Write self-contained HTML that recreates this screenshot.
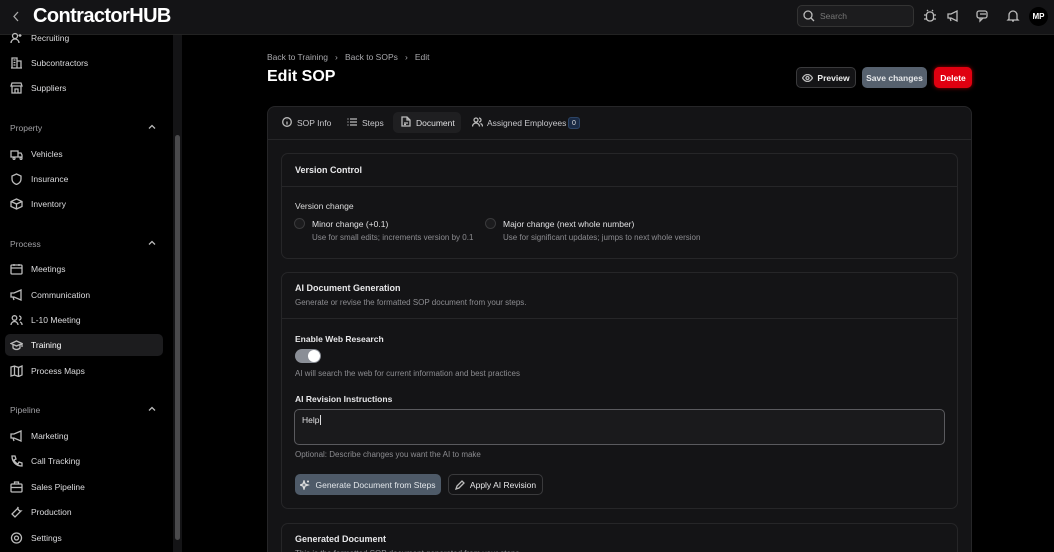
<!DOCTYPE html>
<html style="width:1054px;height:552px;overflow:hidden"><head><meta charset="utf-8"><style>
*{box-sizing:border-box;margin:0;padding:0}
body{width:1054px;height:552px;overflow:hidden;background:#000;font-family:"Liberation Sans",sans-serif;color:#e8e8ea;position:relative;font-size:12px}
.a{position:absolute}
.top{left:0;top:0;width:1054px;height:35px;background:#141416;border-bottom:1px solid #222}
.side{left:0;top:35px;width:172px;height:517px;background:#000}
.si{position:absolute;left:31px;font-size:8.5px;color:#dcdcde;line-height:12px}
.ic{position:absolute;left:10px;width:13px;height:12px}
.sh{position:absolute;left:10px;font-size:8.5px;color:#a0a0a4}
.chev{position:absolute;left:148px;width:8px;height:8px}
.card{background:#141416;border:1px solid #262628;border-radius:8px}
.lbl{font-size:8.5px;font-weight:bold;color:#e8e8ea}
.mut{font-size:8px;color:#8c8c90}
.btn{position:absolute;border-radius:5px;font-size:8.5px;display:flex;align-items:center;justify-content:center;font-weight:bold}
svg{stroke:#bbb;fill:none;stroke-width:1.3}
</style></head><body>
<div class="a top"></div>
<svg class="a" style="left:11px;top:10px" width="10" height="13" viewBox="0 0 10 13"><path d="M7 2L3 6.5L7 11" stroke="#aaa"/></svg>
<div class="a" style="left:33px;top:5px;font-size:20px;font-weight:bold;color:#fff;letter-spacing:-0.6px">ContractorHUB</div>
<div class="a" style="left:797px;top:5px;width:117px;height:22px;border:1px solid #333;border-radius:5px;background:#1c1c1e"></div>
<svg class="a" style="left:803px;top:10px" width="12" height="12" viewBox="0 0 12 12"><circle cx="5" cy="5" r="4"/><path d="M8 8l3 3"/></svg>
<div class="a" style="left:820px;top:11px;font-size:8.5px;color:#777">Search</div>
<svg class="a" style="left:923px;top:9px" width="14" height="14" viewBox="0 0 14 14"><rect x="3.5" y="3" width="7" height="9" rx="3"/><path d="M1 6h2.5M10.5 6h2.5M1 10h2.5M10.5 10h2.5M5 2l-1-1M9 2l1-1"/></svg>
<svg class="a" style="left:946px;top:9px" width="14" height="14" viewBox="0 0 14 14"><path d="M2 5h3l6-3v10l-6-3H2z M4 9l1 3"/></svg>
<svg class="a" style="left:976px;top:9px" width="14" height="14" viewBox="0 0 14 14"><rect x="1" y="2" width="10" height="7" rx="2"/><path d="M4 9v3l3-3M4 5h6"/></svg>
<svg class="a" style="left:1006px;top:9px" width="14" height="14" viewBox="0 0 14 14"><path d="M3 10V6a4 4 0 018 0v4l1 1H2zM6 12h2"/></svg>
<div class="a" style="left:1029px;top:7px;width:19px;height:19px;border-radius:50%;background:#000;color:#fff;font-size:8px;font-weight:bold;display:flex;align-items:center;justify-content:center">MP</div>

<div class="a side"></div>
<div class="a" style="left:173px;top:35px;width:9px;height:517px;background:#141416"></div>
<div class="a" style="left:175px;top:135px;width:5px;height:405px;background:#4a4a4c;border-radius:3px"></div>
<div class="a" style="left:5px;top:334px;width:158px;height:22px;background:#1c1c1e;border-radius:5px"></div>

<svg class="ic" style="top:32px" viewBox="0 0 13 12"><circle cx="5" cy="4" r="2.5"/><path d="M1 11a4 4 0 018 0M10 2v3M8.5 3.5h3"/></svg><div class="si" style="top:32px">Recruiting</div>
<svg class="ic" style="top:57px" viewBox="0 0 13 12"><path d="M1 11h11M2 11V1h5v10M7 4h4v7M3.5 3h2M3.5 5.5h2M3.5 8h2"/></svg><div class="si" style="top:57px">Subcontractors</div>
<svg class="ic" style="top:82px" viewBox="0 0 13 12"><path d="M1 4l1-3h9l1 3zM2 4v7h9V4M5 11V7h3v4"/></svg><div class="si" style="top:82px">Suppliers</div>
<div class="sh" style="top:123px">Property</div><svg class="chev" style="top:123px" viewBox="0 0 8 8"><path d="M1 5.5L4 2.5L7 5.5"/></svg>
<svg class="ic" style="top:148px" viewBox="0 0 13 12"><path d="M1 3h7v6H1zM8 5h3l1 2v2H8M3 10.5a1 1 0 100-.1M10 10.5a1 1 0 100-.1"/></svg><div class="si" style="top:148px">Vehicles</div>
<svg class="ic" style="top:173px" viewBox="0 0 13 12"><path d="M6.5 1L11 3v3c0 3-2 4.5-4.5 5.5C4 10.5 2 9 2 6V3z"/></svg><div class="si" style="top:173px">Insurance</div>
<svg class="ic" style="top:198px" viewBox="0 0 13 12"><path d="M6.5 1L12 3.5v5L6.5 11L1 8.5v-5zM1 3.5L6.5 6L12 3.5M6.5 6v5"/></svg><div class="si" style="top:198px">Inventory</div>
<div class="sh" style="top:239px">Process</div><svg class="chev" style="top:239px" viewBox="0 0 8 8"><path d="M1 5.5L4 2.5L7 5.5"/></svg>
<svg class="ic" style="top:263px" viewBox="0 0 13 12"><rect x="1" y="2" width="11" height="9" rx="1"/><path d="M1 5h11M4 1v2M9 1v2"/></svg><div class="si" style="top:263px">Meetings</div>
<svg class="ic" style="top:289px" viewBox="0 0 13 12"><path d="M1 4h3l7-3v10L4 8H1zM3 8l1 3"/></svg><div class="si" style="top:289px">Communication</div>
<svg class="ic" style="top:314px" viewBox="0 0 13 12"><circle cx="4.5" cy="4" r="2.3"/><path d="M1 11a3.5 3.5 0 017 0M9 2a2 2 0 010 4M10 8a3 3 0 012 3"/></svg><div class="si" style="top:314px">L-10 Meeting</div>
<svg class="ic" style="top:339px" viewBox="0 0 13 12"><path d="M6.5 2L12 4.5L6.5 7L1 4.5zM3 6v3c2 2 5 2 7 0V6M12 4.5V8"/></svg><div class="si" style="top:339px;color:#fff">Training</div>
<svg class="ic" style="top:365px" viewBox="0 0 13 12"><path d="M1 2l3.5-1 4 1.5L12 1v9l-3.5 1.5-4-1.5L1 11zM4.5 1v9M8.5 2.5v9"/></svg><div class="si" style="top:365px">Process Maps</div>
<div class="sh" style="top:405px">Pipeline</div><svg class="chev" style="top:405px" viewBox="0 0 8 8"><path d="M1 5.5L4 2.5L7 5.5"/></svg>
<svg class="ic" style="top:430px" viewBox="0 0 13 12"><path d="M1 4h3l7-3v10L4 8H1zM3 8l1 3"/></svg><div class="si" style="top:430px">Marketing</div>
<svg class="ic" style="top:455px" viewBox="0 0 13 12"><path d="M2 1h3l1 3-2 1a7 7 0 004 4l1-2 3 1v3c-6 0-10-4-10-10z"/></svg><div class="si" style="top:455px">Call Tracking</div>
<svg class="ic" style="top:481px" viewBox="0 0 13 12"><rect x="1" y="3" width="11" height="8" rx="1"/><path d="M4.5 3V1h4v2M1 6.5h11"/></svg><div class="si" style="top:481px">Sales Pipeline</div>
<svg class="ic" style="top:506px" viewBox="0 0 13 12"><path d="M8 1a3 3 0 003 4L5 11 2 8l6-6z"/></svg><div class="si" style="top:506px">Production</div>
<svg class="ic" style="top:532px" viewBox="0 0 13 12"><circle cx="6.5" cy="6" r="2"/><circle cx="6.5" cy="6" r="5"/></svg><div class="si" style="top:532px">Settings</div>

<div class="a" style="left:267px;top:52px;font-size:8.5px;color:#a8a8ac">Back to Training &nbsp;&nbsp;›&nbsp;&nbsp; Back to SOPs &nbsp;&nbsp;›&nbsp;&nbsp; Edit</div>
<div class="a" style="left:267px;top:68px;font-size:16px;font-weight:bold;color:#fff">Edit SOP</div>
<div class="btn" style="left:796px;top:67px;width:60px;height:21px;border:1px solid #3a3a3c;background:#141416;color:#eee"><svg width="11" height="8" viewBox="0 0 11 8" style="margin-right:4px"><path d="M.5 4C2 1.5 4 .5 5.5.5S9 1.5 10.5 4C9 6.5 7 7.5 5.5 7.5S2 6.5.5 4z"/><circle cx="5.5" cy="4" r="1.5"/></svg>Preview</div>
<div class="btn" style="left:862px;top:67px;width:65px;height:21px;background:#56616e;color:#e6e8ea">Save changes</div>
<div class="btn" style="left:934px;top:67px;width:38px;height:21px;background:#e00010;color:#fff;box-shadow:0 0 4px #900">Delete</div>

<div class="a card" style="left:267px;top:106px;width:705px;height:446px;border-bottom:none;border-radius:8px 8px 0 0"></div>
<div class="a" style="left:268px;top:139px;width:703px;height:1px;background:#262628"></div>
<div class="a" style="left:393px;top:112px;width:68px;height:21px;background:#1f1f21;border-radius:5px"></div>
<svg class="a" style="left:282px;top:117px" width="10" height="10" viewBox="0 0 10 10"><circle cx="5" cy="5" r="4.3"/><path d="M5 4.5v3M5 2.7v.3"/></svg>
<div class="a" style="left:297px;top:118px;font-size:8.5px;color:#c8c8cc">SOP Info</div>
<svg class="a" style="left:347px;top:117px" width="10" height="10" viewBox="0 0 10 10"><path d="M3 2h7M3 5h7M3 8h7M.5 2h1M.5 5h1M.5 8h1"/></svg>
<div class="a" style="left:362px;top:118px;font-size:8.5px;color:#c8c8cc">Steps</div>
<svg class="a" style="left:401px;top:116px" width="10" height="11" viewBox="0 0 10 11"><path d="M1 1h5l3 3v6H1zM6 1v3h3M3 7h4M3 8.5h2"/></svg>
<div class="a" style="left:416px;top:118px;font-size:8.5px;color:#e0e0e2">Document</div>
<svg class="a" style="left:472px;top:117px" width="11" height="10" viewBox="0 0 11 10"><circle cx="4" cy="3" r="2"/><path d="M.5 9.5a3.5 3.5 0 017 0M7 1a2 2 0 010 4M8.5 6.5a3 3 0 012 3"/></svg>
<div class="a" style="left:487px;top:118px;font-size:8.5px;color:#c8c8cc">Assigned Employees</div>
<div class="a" style="left:568px;top:117px;width:12px;height:12px;background:#1a2a44;border:1px solid #2c4466;border-radius:3px;font-size:7px;color:#ddd;display:flex;align-items:center;justify-content:center">0</div>

<div class="a card" style="left:281px;top:153px;width:677px;height:106px;border-radius:7px"></div>
<div class="a" style="left:282px;top:186px;width:675px;height:1px;background:#262628"></div>
<div class="a lbl" style="left:295px;top:165px;font-size:9px">Version Control</div>
<div class="a lbl" style="left:295px;top:201px;font-weight:normal;color:#ddd">Version change</div>
<div class="a" style="left:294px;top:218px;width:11px;height:11px;border-radius:50%;border:1px solid #3a3a3c;background:#1c1c1e"></div>
<div class="a lbl" style="left:312px;top:219px;font-weight:normal;color:#e0e0e2">Minor change (+0.1)</div>
<div class="a mut" style="left:312px;top:233px">Use for small edits; increments version by 0.1</div>
<div class="a" style="left:485px;top:218px;width:11px;height:11px;border-radius:50%;border:1px solid #3a3a3c;background:#1c1c1e"></div>
<div class="a lbl" style="left:503px;top:219px;font-weight:normal;color:#e0e0e2">Major change (next whole number)</div>
<div class="a mut" style="left:503px;top:233px">Use for significant updates; jumps to next whole version</div>

<div class="a card" style="left:281px;top:272px;width:677px;height:237px;border-radius:7px"></div>
<div class="a" style="left:282px;top:318px;width:675px;height:1px;background:#262628"></div>
<div class="a lbl" style="left:295px;top:283px;font-size:9px">AI Document Generation</div>
<div class="a mut" style="left:295px;top:298px">Generate or revise the formatted SOP document from your steps.</div>
<div class="a lbl" style="left:295px;top:334px">Enable Web Research</div>
<div class="a" style="left:295px;top:349px;width:26px;height:14px;border-radius:7px;background:#8a8e96"></div>
<div class="a" style="left:308px;top:350px;width:12px;height:12px;border-radius:50%;background:#fff"></div>
<div class="a mut" style="left:295px;top:369px">AI will search the web for current information and best practices</div>
<div class="a lbl" style="left:295px;top:394px">AI Revision Instructions</div>
<div class="a" style="left:294px;top:409px;width:651px;height:36px;border:1px solid #5a5a5e;border-radius:5px;background:#1a1a1c"></div>
<div class="a" style="left:302px;top:415px;font-size:8.5px;color:#e0e0e2">Help<span style="border-left:1px solid #ddd;margin-left:1px"></span></div>
<div class="a mut" style="left:295px;top:450px">Optional: Describe changes you want the AI to make</div>
<div class="btn" style="left:295px;top:474px;width:146px;height:21px;background:#4e5a68;color:#e2e6ea;font-weight:normal"><svg width="10" height="10" viewBox="0 0 10 10" style="margin-right:5px"><path d="M4 1l1 3 3 1-3 1-1 3-1-3-3-1 3-1zM8 .5v2M7 1.5h2" stroke="#ddd"/></svg>Generate Document from Steps</div>
<div class="btn" style="left:448px;top:474px;width:95px;height:21px;border:1px solid #3a3a3c;background:#141416;color:#e6e6e8;font-weight:normal"><svg width="10" height="10" viewBox="0 0 10 10" style="margin-right:5px"><path d="M1 9l1-3 5-5 2 2-5 5z"/></svg>Apply AI Revision</div>

<div class="a card" style="left:281px;top:523px;width:677px;height:29px;border-bottom:none;border-radius:7px 7px 0 0"></div>
<div class="a lbl" style="left:295px;top:534px;font-size:9px">Generated Document</div>
<div class="a mut" style="left:295px;top:549px;height:3px;overflow:hidden">This is the formatted SOP document generated from your steps</div>
</body></html>
